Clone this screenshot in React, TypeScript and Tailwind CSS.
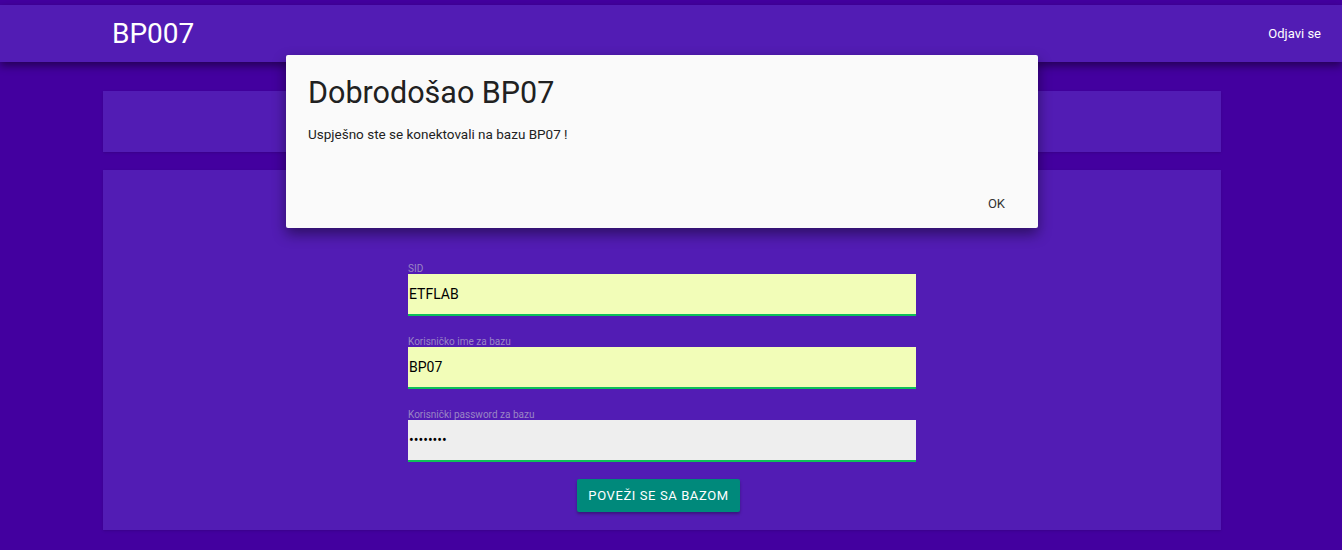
const fields = [
  { label: "SID", value: "ETFLAB", type: "text", bg: "bg-[#f2fdb8]" },
  { label: "Korisničko ime za bazu", value: "BP07", type: "text", bg: "bg-[#f2fdb8]" },
  { label: "Korisnički password za bazu", value: "BP07pass", type: "password", bg: "bg-[#eeeeee]" },
];

const Field = ({ label, value, type, bg }: (typeof fields)[number]) => (
  <div className="flex flex-col">
    <label className="h-[11px] text-[10px] leading-[11px] text-[#9a86c4]">{label}</label>
    <input
      type={type}
      defaultValue={value}
      className={`h-[42px] w-full border-b-2 border-[#0ec05a] px-px text-[14px] text-black outline-none ${bg}`}
    />
  </div>
);

export default function App() {
  return (
    <div className="relative h-[550px] overflow-hidden bg-[#43009f] pt-[5px] font-['Roboto',sans-serif]">
      <header className="relative z-10 flex h-[57px] items-center justify-between bg-[#521cb4] pl-[112px] pr-[21px] shadow-[0_4px_8px_rgba(0,0,0,0.45)]">
        <h1 className="text-[28px] leading-none text-white">BP007</h1>
        <a className="text-[13px] text-white">Odjavi se</a>
      </header>

      <main className="ml-[103px] flex w-[1118px] flex-col gap-[18px] pt-[29px]">
        <section className="h-[61px] bg-[#521cb4] shadow-sm" />
        <section className="h-[360px] bg-[#521cb4] pt-[93px] shadow-sm">
          <form className="mx-auto flex w-[508px] flex-col gap-[20px]">
            {fields.map((f) => (
              <Field key={f.label} {...f} />
            ))}
            <button
              type="button"
              className="ml-[169px] -mt-[3px] h-[33px] w-[163px] rounded-[2px] bg-[#00897b] text-[13px] tracking-[0.6px] text-white shadow-[0_2px_3px_rgba(0,0,0,0.3)]"
            >
              POVEŽI SE SA BAZOM
            </button>
          </form>
        </section>
      </main>

      <div className="absolute left-[286px] top-[55px] z-20 flex h-[173px] w-[752px] flex-col rounded-[2px] bg-[#fafafa] shadow-[0_6px_14px_rgba(0,0,0,0.45)]">
        <h2 className="pl-[22px] pt-[19px] text-[30.5px] leading-[37px] text-[#212121]">Dobrodošao BP07</h2>
        <p className="pl-[22px] pt-[13px] text-[13.5px] text-[#222]">Uspješno ste se konektovali na bazu BP07 !</p>
        <div className="mt-auto flex justify-end pb-[15px] pr-[25px]">
          <button type="button" className="px-2 text-[13px] text-[#333]">
            OK
          </button>
        </div>
      </div>
    </div>
  );
}
